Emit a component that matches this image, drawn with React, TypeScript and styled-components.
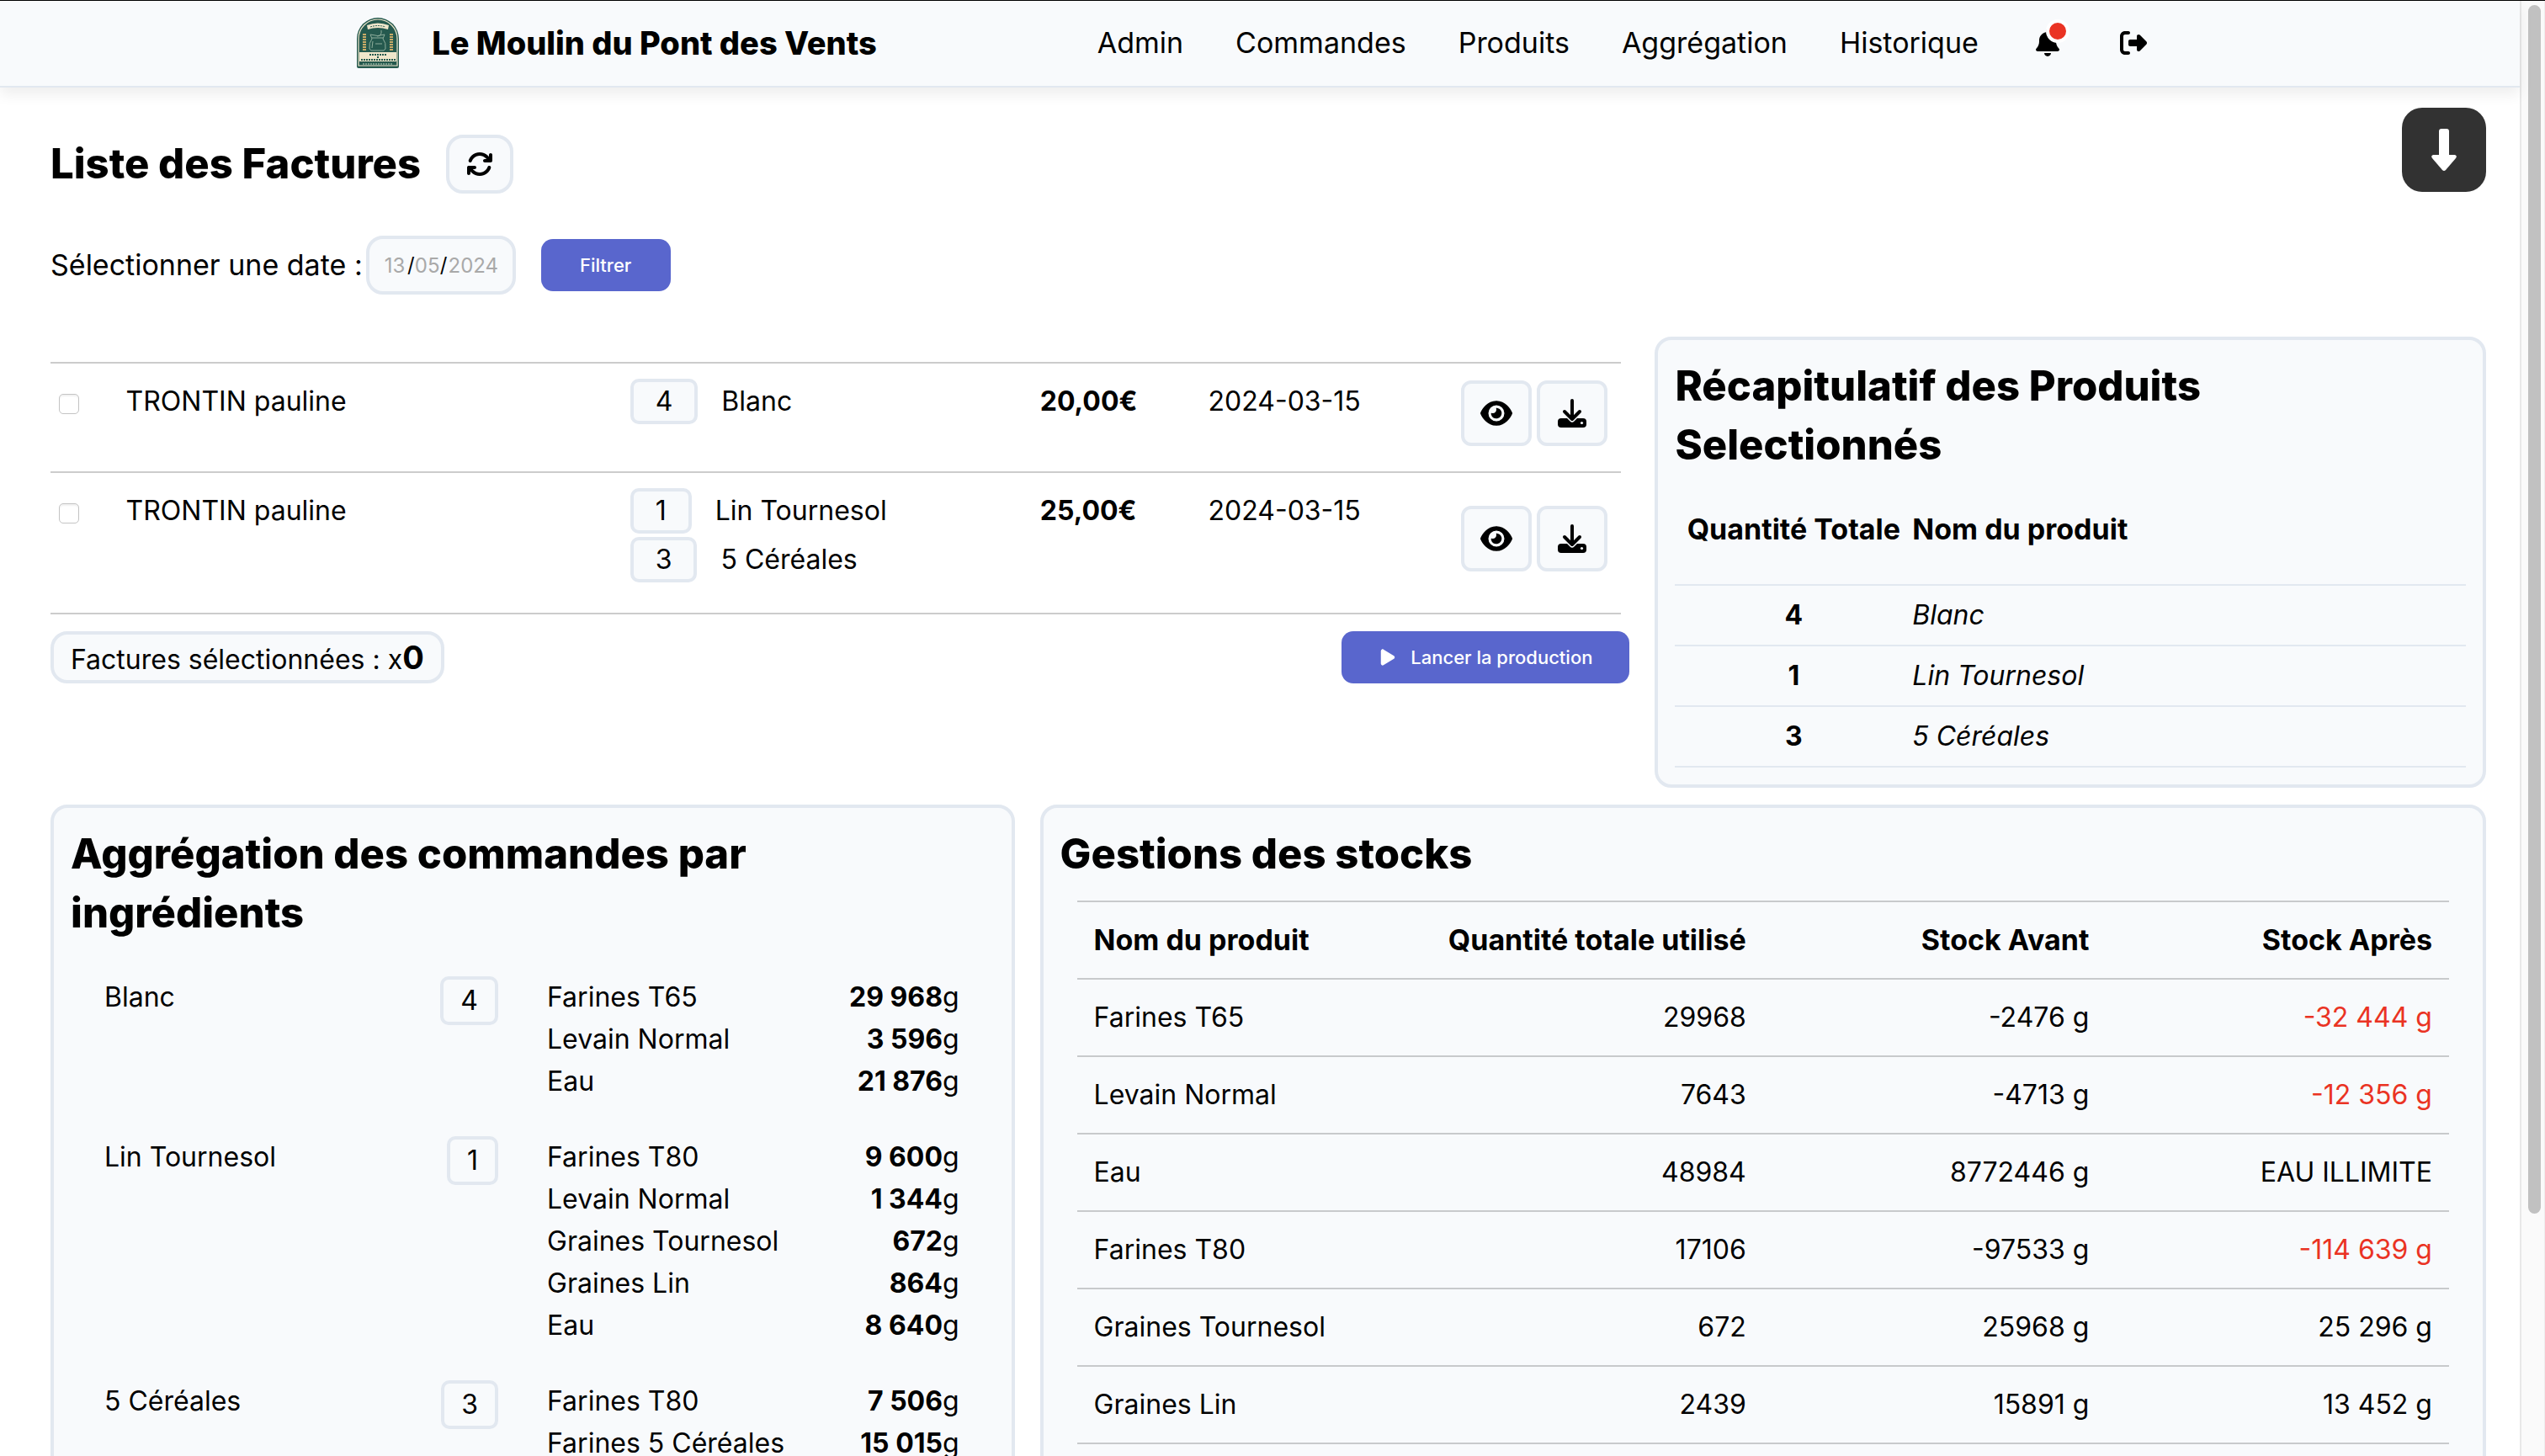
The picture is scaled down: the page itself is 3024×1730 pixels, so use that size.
import React, { useState } from "react";
import styled, { createGlobalStyle, css } from "styled-components";
import { FaArrowsRotate, FaBell, FaEye, FaPlay, FaRightFromBracket } from "react-icons/fa6";

const color = {
  text: "#000000",
  surface: "#f8fafc",
  border: "#e2e8f0",
  line: "#cccccc",
  primary: "#5966cd",
  danger: "#ea3323",
};

const GlobalStyle = createGlobalStyle`
  *, *::before, *::after { box-sizing: border-box; }
  body {
    margin: 0;
    background: #ffffff;
    color: ${color.text};
    font-family: Inter, "Noto Sans", sans-serif;
    font-size: 32px;
    line-height: 50px;
  }
  button, input { font-family: inherit; }
  h1, h2, ul, p { margin: 0; padding: 0; }
  ul { list-style: none; }
`;

const Shell = styled.div`
  display: flex;
  height: 100vh;
  overflow: hidden;
  border-top: 1px solid #000000;
`;

const Page = styled.div`
  position: relative;
  flex: 1;
  min-width: 0;
`;

const ScrollTrack = styled.div`
  flex: none;
  width: 30px;
  padding: 5px 4px 0 8px;
  background: #fafafa;
  border-left: 2px solid #e8e8e8;
  border-right: 1px solid #ededed;
`;

const ScrollThumb = styled.div`
  height: 83.3%;
  border-radius: 8px;
  background: #c1c1c1;
`;

const TopBar = styled.header`
  display: flex;
  align-items: center;
  justify-content: space-between;
  height: 103px;
  padding: 0 14% 2px;
  background: ${color.surface};
  border-bottom: 2px solid ${color.border};
  box-shadow: 0 8px 16px rgba(0, 0, 0, 0.07);
`;

const Brand = styled.a`
  display: flex;
  align-items: center;
  gap: 34px;
  color: inherit;
  font-size: 38px;
  font-weight: 800;
  text-decoration: none;
  white-space: nowrap;
`;

const Nav = styled.nav`
  display: flex;
  align-items: center;
  gap: 62px;
  padding-right: 20px;
`;

const NavLink = styled.a`
  color: inherit;
  font-size: 34px;
  text-decoration: none;
`;

const NavIcon = styled.button`
  position: relative;
  display: flex;
  margin: 0;
  padding: 0 4px;
  border: 0;
  background: none;
  color: inherit;
  font-size: 32px;
`;

const AlertDot = styled.span`
  position: absolute;
  top: -12px;
  right: -6px;
  width: 28px;
  height: 28px;
  border: 4px solid #ffffff;
  border-radius: 50%;
  background: ${color.danger};
`;

const Content = styled.main`
  display: flex;
  flex-direction: column;
  gap: 20px;
  padding: 56px 40px 40px 60px;
`;

const Intro = styled.div`
  display: flex;
  flex-direction: column;
  gap: 50px;
  padding-bottom: 30px;
`;

const Line = styled.div`
  display: flex;
  align-items: center;
`;

const Title = styled.h1`
  margin-right: 30px;
  font-size: 49px;
  font-weight: 800;
  line-height: 70px;
`;

const Heading = styled.h2`
  font-size: 49px;
  font-weight: 800;
  line-height: 70px;
`;

const boxed = css`
  border: 4px solid ${color.border};
  background: ${color.surface};
`;

const RefreshButton = styled.button`
  ${boxed}
  display: flex;
  align-items: center;
  justify-content: center;
  width: 80px;
  height: 70px;
  border-radius: 20px;
  color: inherit;
  font-size: 32px;
`;

const DateLabel = styled.label`
  font-size: 34px;
`;

const DateBox = styled.span`
  ${boxed}
  display: flex;
  align-items: center;
  justify-content: center;
  width: 178px;
  height: 70px;
  margin: 0 30px 0 4px;
  border-radius: 20px;
  font-size: 24px;
`;

const DatePart = styled.input<{ $wide?: boolean }>`
  width: ${(p) => (p.$wide ? 62 : 30)}px;
  padding: 0;
  border: 0;
  background: none;
  color: #a9a9a9;
  font-size: 24px;
  text-align: center;
`;

const PrimaryButton = styled.button`
  display: flex;
  align-items: center;
  justify-content: center;
  gap: 16px;
  min-width: 154px;
  height: 62px;
  padding: 0 44px;
  border: 0;
  border-radius: 14px;
  background: ${color.primary};
  color: #ffffff;
  font-size: 22px;
  font-weight: 500;
`;

const DownButton = styled.button`
  position: absolute;
  top: 127px;
  right: 40px;
  display: flex;
  align-items: center;
  justify-content: center;
  width: 100px;
  height: 100px;
  border: 0;
  border-radius: 24px;
  background: #323232;
  color: #ffffff;
`;

const TopGrid = styled.div`
  display: grid;
  grid-template-columns: 19fr 10fr;
  gap: 30px;
`;

const BottomGrid = styled.div`
  display: grid;
  grid-template-columns: 2fr 3fr;
  gap: 30px;
`;

const Card = styled.section`
  ${boxed}
  padding: 20px;
  border-radius: 20px;
`;

const InvoicePane = styled.section`
  padding-top: 30px;
`;

const InvoiceFrame = styled.div`
  padding-right: 10px;
`;

const InvoiceTable = styled.table`
  width: 100%;
  border-collapse: separate;
  border-spacing: 0;
  border-top: 2px solid ${color.line};
  table-layout: fixed;
`;

const InvoiceCell = styled.td<{ $strong?: boolean }>`
  padding: 18px 0 36px;
  border-bottom: 2px solid ${color.line};
  font-weight: ${(p) => (p.$strong ? 700 : 400)};
  line-height: 54px;
  vertical-align: top;
`;

const ActionCell = styled(InvoiceCell)`
  padding: 20px 0 30px;
  vertical-align: middle;
`;

const Checkbox = styled.input`
  display: block;
  appearance: none;
  width: 24px;
  height: 24px;
  margin: 18px 0 0 10px;
  border: 1px solid #c4c4c4;
  border-radius: 5px;
  background: #ffffff;
  box-shadow: inset 0 2px 2px rgba(0, 0, 0, 0.06);
`;

const ProductList = styled.ul`
  display: flex;
  flex-direction: column;
  gap: 4px;
`;

const ProductItem = styled.li`
  display: flex;
  align-items: center;
  gap: 28px;
`;

const Quantity = styled.span<{ $pad: number; $tall?: boolean }>`
  ${boxed}
  padding: 0 ${(p) => p.$pad}px;
  border-radius: 10px;
  line-height: ${(p) => (p.$tall ? 50 : 46)}px;
`;

const Actions = styled.div`
  display: flex;
  gap: 6px;
`;

const IconButton = styled.button`
  ${boxed}
  display: flex;
  align-items: center;
  justify-content: center;
  width: 84px;
  height: 78px;
  padding: 0;
  border-radius: 12px;
  color: inherit;
  font-size: 38px;
`;

const InvoiceFooter = styled.div`
  display: flex;
  justify-content: space-between;
  padding-top: 20px;
`;

const Counter = styled.p`
  ${boxed}
  height: 62px;
  padding: 0 20px;
  border-radius: 20px;
  line-height: 54px;

  strong {
    font-size: 38px;
  }
`;

const RecapTable = styled.table`
  width: 100%;
  margin-top: 20px;
  border-collapse: separate;
  border-spacing: 0;
  table-layout: fixed;
`;

const RecapHead = styled.th<{ $center?: boolean }>`
  padding: 20px 0 40px;
  border-bottom: 2px solid ${color.border};
  font-size: 34px;
  font-weight: 700;
  text-align: ${(p) => (p.$center ? "center" : "left")};
  white-space: nowrap;
`;

const RecapCell = styled.td<{ $center?: boolean }>`
  padding: 10px 0;
  border-bottom: 2px solid ${color.border};
  font-style: ${(p) => (p.$center ? "normal" : "italic")};
  font-weight: ${(p) => (p.$center ? 700 : 400)};
  text-align: ${(p) => (p.$center ? "center" : "left")};
`;

const Recipes = styled.div`
  display: flex;
  flex-direction: column;
  gap: 40px;
  padding: 40px 42px 0 40px;
`;

const Recipe = styled.div`
  display: grid;
  grid-template-columns: 468px 1fr;
  column-gap: 58px;
`;

const RecipeName = styled.div`
  display: flex;
  align-items: flex-start;
  justify-content: space-between;
  height: 58px;
`;

const Ingredient = styled.li`
  display: flex;
  justify-content: space-between;
  white-space: nowrap;
`;

const StockFrame = styled.div`
  padding: 20px 20px 0;
`;

const StockTable = styled.table`
  width: 100%;
  border-collapse: separate;
  border-spacing: 0;
  border-top: 2px solid #c8cacc;
  table-layout: fixed;
`;

const stockCell = css`
  padding: 20px;
  border-bottom: 2px solid #c8cacc;
  text-align: right;
  white-space: nowrap;

  &:first-child {
    text-align: left;
  }
`;

const StockHead = styled.th`
  ${stockCell}
  font-size: 34px;
  font-weight: 700;
`;

const StockCell = styled.td<{ $low?: boolean }>`
  ${stockCell}
  color: ${(p) => (p.$low ? color.danger : "inherit")};
`;

function Logo() {
  return (
    <svg width="60" height="60" viewBox="0 0 60 60" aria-hidden="true">
      <path d="M5 58V25a25 25 0 0 1 50 0v33q0 2-2 2H7q-2 0-2-2z" fill="#25594e" />
      <path d="M7 57V25a23 23 0 0 1 46 0v32z" fill="none" stroke="#efe6cb" strokeWidth="1.2" />
      <path d="M8 41h44v11H8z" fill="#efe6cb" />
      <path d="M17 9q13-5 26 0l-1 5q-12-4-24 0z" fill="#efe6cb" />
      <path d="M21 11q9-3 18 0" fill="none" stroke="#25594e" strokeWidth="1" strokeDasharray="2 1" />
      <path
        d="M21 20q9 3 17 0l-2 5q4 5 3 12l-2 2H22l-2-2q-1-7 3-12zM23 24h13M29 22q6 0 5-7M24 28l-1 8M27 31h8"
        fill="none"
        stroke="#8fae9c"
        strokeWidth="1"
      />
      <path d="M14 19v20M46 19v20" stroke="#c9ab68" strokeWidth="4" strokeDasharray="2 1" />
      <path d="M20 44h20M29 47h3" stroke="#25594e" strokeWidth="2" strokeDasharray="2 1" />
      <path d="M10 50h41" stroke="#25594e" strokeWidth="2" strokeDasharray="2 1" />
      <path d="M12 55h36" stroke="#8fae9c" strokeWidth="1.4" strokeDasharray="2 1" />
    </svg>
  );
}

function DownArrow() {
  return (
    <svg width="32" height="52" viewBox="0 0 32 52" fill="currentColor" aria-hidden="true">
      <rect x="10" y="1" width="12" height="36" rx="3" />
      <path d="M3 32h26q3 1 1 4L18 50q-2 2-4 0L2 36q-2-3 1-4z" />
    </svg>
  );
}

function DownloadIcon() {
  return (
    <svg width="34" height="35" viewBox="0 0 34 35" aria-hidden="true">
      <rect x="0" y="23" width="34" height="11" rx="4" fill="currentColor" />
      <circle cx="28.500" cy="28.500" r="1.600" fill={color.surface} />
      <g fill="none" strokeLinecap="round" strokeLinejoin="round">
        <path d="M9 16l8 8 8-8" stroke={color.surface} strokeWidth="7" />
        <path d="M17 2v21M8 15l9 9 9-9" stroke="currentColor" strokeWidth="4" />
      </g>
    </svg>
  );
}

const navItems = ["Admin", "Commandes", "Produits", "Aggrégation", "Historique"];

const invoices = [
  {
    id: "a",
    client: "TRONTIN pauline",
    products: [{ qty: 4, name: "Blanc" }],
    price: "20,00€",
    date: "2024-03-15",
  },
  {
    id: "b",
    client: "TRONTIN pauline",
    products: [
      { qty: 1, name: "Lin Tournesol" },
      { qty: 3, name: "5 Céréales" },
    ],
    price: "25,00€",
    date: "2024-03-15",
  },
];

const recap = [
  { qty: 4, name: "Blanc" },
  { qty: 1, name: "Lin Tournesol" },
  { qty: 3, name: "5 Céréales" },
];

const recipes = [
  {
    name: "Blanc",
    qty: 4,
    items: [
      ["Farines T65", "29 968"],
      ["Levain Normal", "3 596"],
      ["Eau", "21 876"],
    ],
  },
  {
    name: "Lin Tournesol",
    qty: 1,
    items: [
      ["Farines T80", "9 600"],
      ["Levain Normal", "1 344"],
      ["Graines Tournesol", "672"],
      ["Graines Lin", "864"],
      ["Eau", "8 640"],
    ],
  },
  {
    name: "5 Céréales",
    qty: 3,
    items: [
      ["Farines T80", "7 506"],
      ["Farines 5 Céréales", "15 015"],
    ],
  },
];

const stocks = [
  { name: "Farines T65", used: "29968", before: "-2476 g", after: "-32 444 g", low: true },
  { name: "Levain Normal", used: "7643", before: "-4713 g", after: "-12 356 g", low: true },
  { name: "Eau", used: "48984", before: "8772446 g", after: "EAU ILLIMITE", low: false },
  { name: "Farines T80", used: "17106", before: "-97533 g", after: "-114 639 g", low: true },
  { name: "Graines Tournesol", used: "672", before: "25968 g", after: "25 296 g", low: false },
  { name: "Graines Lin", used: "2439", before: "15891 g", after: "13 452 g", low: false },
];

export default function App() {
  const [selected, setSelected] = useState<string[]>([]);
  const [day, setDay] = useState("13");
  const [month, setMonth] = useState("05");
  const [year, setYear] = useState("2024");

  const toggle = (id: string) =>
    setSelected((list) => (list.includes(id) ? list.filter((x) => x !== id) : [...list, id]));

  return (
    <Shell>
      <GlobalStyle />
      <Page>
        <TopBar>
          <Brand href="#">
            <Logo />
            Le Moulin du Pont des Vents
          </Brand>
          <Nav>
            {navItems.map((item) => (
              <NavLink key={item} href="#">
                {item}
              </NavLink>
            ))}
            <NavIcon aria-label="Notifications">
              <FaBell />
              <AlertDot />
            </NavIcon>
            <NavIcon aria-label="Déconnexion">
              <FaRightFromBracket />
            </NavIcon>
          </Nav>
        </TopBar>

        <DownButton aria-label="Descendre">
          <DownArrow />
        </DownButton>

        <Content>
          <Intro>
            <Line>
              <Title>Liste des Factures</Title>
              <RefreshButton aria-label="Actualiser">
                <FaArrowsRotate />
              </RefreshButton>
            </Line>
            <Line>
              <DateLabel htmlFor="day">Sélectionner une date :</DateLabel>
              <DateBox>
                <DatePart id="day" value={day} onChange={(e) => setDay(e.target.value)} />/
                <DatePart aria-label="Mois" value={month} onChange={(e) => setMonth(e.target.value)} />/
                <DatePart $wide aria-label="Année" value={year} onChange={(e) => setYear(e.target.value)} />
              </DateBox>
              <PrimaryButton>Filtrer</PrimaryButton>
            </Line>
          </Intro>

          <TopGrid>
            <InvoicePane>
              <InvoiceFrame>
                <InvoiceTable>
                  <colgroup>
                    <col style={{ width: "4.8%" }} />
                    <col style={{ width: "32.1%" }} />
                    <col style={{ width: "26.1%" }} />
                    <col style={{ width: "10.7%" }} />
                    <col style={{ width: "16.1%" }} />
                    <col />
                  </colgroup>
                  <tbody>
                    {invoices.map((inv) => (
                      <tr key={inv.id}>
                        <InvoiceCell>
                          <Checkbox
                            type="checkbox"
                            aria-label="Sélectionner la facture"
                            checked={selected.includes(inv.id)}
                            onChange={() => toggle(inv.id)}
                          />
                        </InvoiceCell>
                        <InvoiceCell>{inv.client}</InvoiceCell>
                        <InvoiceCell>
                          <ProductList>
                            {inv.products.map((p) => (
                              <ProductItem key={p.name}>
                                <Quantity $pad={26}>{p.qty}</Quantity>
                                {p.name}
                              </ProductItem>
                            ))}
                          </ProductList>
                        </InvoiceCell>
                        <InvoiceCell $strong>{inv.price}</InvoiceCell>
                        <InvoiceCell>{inv.date}</InvoiceCell>
                        <ActionCell>
                          <Actions>
                            <IconButton aria-label="Voir">
                              <FaEye />
                            </IconButton>
                            <IconButton aria-label="Télécharger">
                              <DownloadIcon />
                            </IconButton>
                          </Actions>
                        </ActionCell>
                      </tr>
                    ))}
                  </tbody>
                </InvoiceTable>
              </InvoiceFrame>
              <InvoiceFooter>
                <Counter>
                  Factures sélectionnées : x<strong>{selected.length}</strong>
                </Counter>
                <PrimaryButton>
                  <FaPlay />
                  Lancer la production
                </PrimaryButton>
              </InvoiceFooter>
            </InvoicePane>

            <Card>
              <Heading>
                Récapitulatif des Produits
                <br />
                Selectionnés
              </Heading>
              <RecapTable>
                <colgroup>
                  <col style={{ width: "30%" }} />
                  <col />
                </colgroup>
                <thead>
                  <tr>
                    <RecapHead $center>Quantité Totale</RecapHead>
                    <RecapHead>Nom du produit</RecapHead>
                  </tr>
                </thead>
                <tbody>
                  {recap.map((r) => (
                    <tr key={r.name}>
                      <RecapCell $center>{r.qty}</RecapCell>
                      <RecapCell>{r.name}</RecapCell>
                    </tr>
                  ))}
                </tbody>
              </RecapTable>
            </Card>
          </TopGrid>

          <BottomGrid>
            <Card>
              <Heading>
                Aggrégation des commandes par
                <br />
                ingrédients
              </Heading>
              <Recipes>
                {recipes.map((r) => (
                  <Recipe key={r.name}>
                    <RecipeName>
                      {r.name}
                      <Quantity $pad={20} $tall>
                        {r.qty}
                      </Quantity>
                    </RecipeName>
                    <ul>
                      {r.items.map(([name, grams]) => (
                        <Ingredient key={name}>
                          {name}
                          <span>
                            <strong>{grams}</strong>g
                          </span>
                        </Ingredient>
                      ))}
                    </ul>
                  </Recipe>
                ))}
              </Recipes>
            </Card>

            <Card>
              <Heading>Gestions des stocks</Heading>
              <StockFrame>
                <StockTable>
                  <thead>
                    <tr>
                      <StockHead>Nom du produit</StockHead>
                      <StockHead>Quantité totale utilisé</StockHead>
                      <StockHead>Stock Avant</StockHead>
                      <StockHead>Stock Après</StockHead>
                    </tr>
                  </thead>
                  <tbody>
                    {stocks.map((s) => (
                      <tr key={s.name}>
                        <StockCell>{s.name}</StockCell>
                        <StockCell>{s.used}</StockCell>
                        <StockCell>{s.before}</StockCell>
                        <StockCell $low={s.low}>{s.after}</StockCell>
                      </tr>
                    ))}
                  </tbody>
                </StockTable>
              </StockFrame>
            </Card>
          </BottomGrid>
        </Content>
      </Page>
      <ScrollTrack>
        <ScrollThumb />
      </ScrollTrack>
    </Shell>
  );
}
